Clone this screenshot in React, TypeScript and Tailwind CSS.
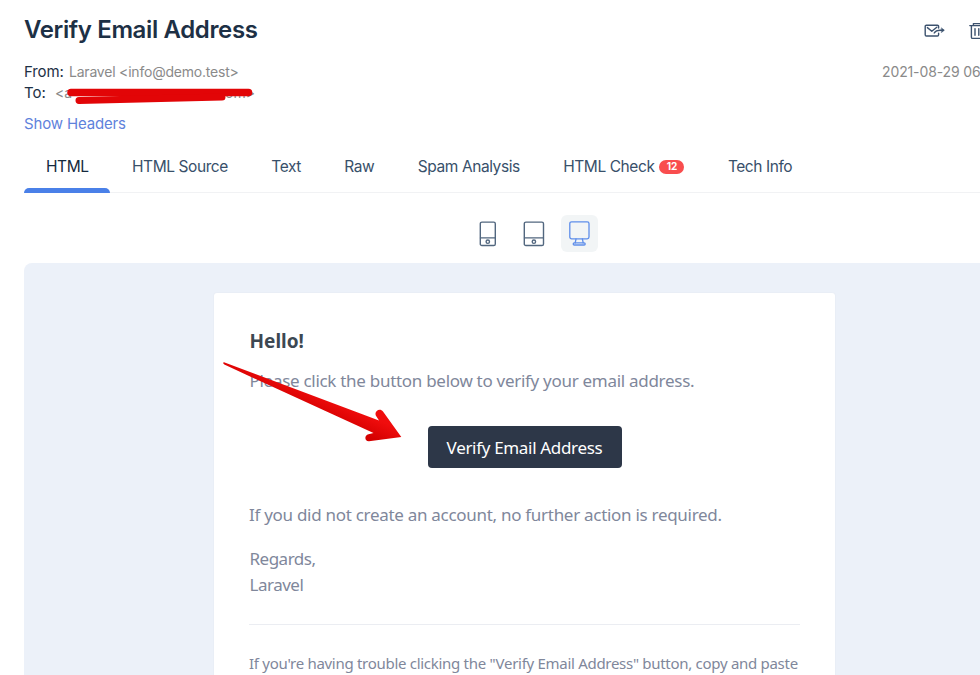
import type { ReactNode } from "react";

const stroke = {
  fill: "none",
  stroke: "currentColor",
  strokeLinecap: "round" as const,
  strokeLinejoin: "round" as const,
};

function ForwardIcon() {
  return (
    <svg width="22" height="16" viewBox="0 0 22 16" {...stroke} strokeWidth="1.4">
      <path d="M14.6 5V3.4a1.2 1.2 0 0 0-1.2-1.2H2.4a1.2 1.2 0 0 0-1.2 1.2v8.4A1.2 1.2 0 0 0 2.4 13h11a1.2 1.2 0 0 0 1.2-1.2v-1.6" />
      <path d="M3.4 4.6 7.8 8.2 12.8 4.2" />
      <path d="M10.2 10c1.2-2 3-2.8 6-2.8h3" />
      <path d="M17.6 5 20.4 7.2 17.6 9.4z" fill="currentColor" strokeWidth="0.5" />
    </svg>
  );
}

function TrashIcon() {
  return (
    <svg width="16" height="18" viewBox="0 0 16 18" {...stroke} strokeWidth="1.4">
      <path d="M.8 3.6h14.4M4.4 3.4V1.6h7.2v1.8M2.4 3.8v11.4a1.2 1.2 0 0 0 1.2 1.2h8.8a1.2 1.2 0 0 0 1.2-1.2V3.8M6 6.6v6.6M9.8 6.6v6.6" />
    </svg>
  );
}

function PhoneIcon() {
  return (
    <svg width="18" height="26" viewBox="0 0 18 26" {...stroke} strokeWidth="1.4">
      <rect x="1.3" y="1.1" width="15" height="23.4" rx="1.6" />
      <path d="M1.5 16.9h14.6" />
      <circle cx="8.8" cy="20.7" r="1.7" />
    </svg>
  );
}

function TabletIcon() {
  return (
    <svg width="22" height="26" viewBox="0 0 22 26" {...stroke} strokeWidth="1.4">
      <rect x="1.3" y="1.1" width="19.2" height="23.4" rx="1.6" />
      <path d="M1.5 16.9h18.8" />
      <circle cx="10.9" cy="20.7" r="1.7" />
    </svg>
  );
}

function DesktopIcon() {
  return (
    <svg width="22" height="26" viewBox="0 0 22 26" {...stroke} strokeWidth="1.3">
      <rect x="0.8" y="1.8" width="19.2" height="17" rx="1.8" />
      <path d="M7 19 6.2 22.8M13.4 19l.8 3.8" />
      <rect x="4.2" y="22.8" width="12" height="2.2" rx="1.1" />
    </svg>
  );
}

function Tab({ children, active = false }: { children: ReactNode; active?: boolean }) {
  return (
    <div
      className={
        active
          ? "relative flex h-[52px] shrink-0 items-center text-[#15293d]"
          : "flex h-[52px] shrink-0 items-center"
      }
    >
      {children}
      {active && (
        <span className="absolute -left-[22px] bottom-0 h-[5px] w-[86px] rounded-t-[5px] bg-[#4a80e8]" />
      )}
    </div>
  );
}

export default function App() {
  return (
    <div className="relative h-[675px] w-[980px] overflow-hidden bg-white pl-6 font-['Inter',sans-serif]">
      <header className="flex h-[61px] items-center justify-between">
        <h1 className="-mt-px text-2xl font-semibold tracking-[-0.37px] text-[#1d3045]">Verify Email Address</h1>
        <div className="-mr-[5px] flex items-center gap-[23px] text-[#3c526e]">
          <ForwardIcon />
          <TrashIcon />
        </div>
      </header>

      <div className="flex h-[21px] items-center justify-between whitespace-nowrap">
        <div className="flex items-center">
          <span className="w-[45px] pt-px text-[15px] tracking-[-0.1px] text-[#1d3045]">From:</span>
          <span className="text-sm tracking-[-0.21px] text-[#8a8a8a]">Laravel &lt;info@demo.test&gt;</span>
        </div>
        <span className="w-[98px] text-sm tracking-[-0.12px] text-[#8a8a8a]">2021-08-29 06</span>
      </div>
      <div className="flex h-[21px] items-center text-[15px]">
        <span className="w-[31px] pt-px text-[#1d3045]">To:</span>
        <span className="flex w-[200px] justify-between text-sm text-[#8a8a8a]">
          <span>&lt;a</span>
          <span>om&gt;</span>
        </span>
      </div>
      <a className="mt-[10px] flex h-[22px] items-center text-[15px] tracking-[-0.15px] text-[#5f82dc]">
        Show Headers
      </a>

      <nav className="mt-[6px] flex h-[52px] items-center gap-[43.4px] whitespace-nowrap border-b border-[#f1f2f4] pl-[22px] text-[15.5px] tracking-[-0.42px] text-[#38506a]">
        <Tab active>HTML</Tab>
        <Tab>HTML Source</Tab>
        <Tab>Text</Tab>
        <Tab>Raw</Tab>
        <Tab>Spam Analysis</Tab>
        <Tab>
          HTML Check
          <span className="ml-[5px] flex h-[14px] w-[25px] items-center justify-center rounded-full bg-[#f94d4e] text-[10px] font-bold tracking-normal text-white">
            12
          </span>
        </Tab>
        <Tab>Tech Info</Tab>
      </nav>

      <div className="flex h-[70px] items-center pl-[455px] pt-[11px] text-[#52677f]">
        <PhoneIcon />
        <span className="ml-[26px]">
          <TabletIcon />
        </span>
        <span className="-mt-[1px] ml-[16px] flex h-[37px] w-[37px] items-center justify-center rounded-md bg-[#f2f5f6] text-[#5f8eea]">
          <DesktopIcon />
        </span>
      </div>

      <section className="h-[412px] rounded-tl-lg bg-[#ecf1f9] pl-[190px] pt-[30px]">
        <article className="h-[400px] w-[621px] rounded-t-[3px] bg-white px-[35px] pt-[34px] font-['Noto_Sans',sans-serif] text-[17px] tracking-[-0.29px] text-[#80879b] shadow-[0_0_2px_rgba(0,0,0,0.05)]">
          <h2 className="h-[28px] pl-[0.5px] text-[19px] font-bold leading-[28px] tracking-normal text-[#3d4852]">
            Hello!
          </h2>
          <p className="mt-[13px] h-[26px] whitespace-nowrap pl-[0.5px] leading-[26px]">
            Please click the button below to verify your email address.
          </p>
          <div className="mt-[32px] flex justify-center">
            <button className="h-[42px] w-[194px] whitespace-nowrap rounded bg-[#2d3748] pt-px text-[17px] tracking-[-0.32px] text-white">
              Verify Email Address
            </button>
          </div>
          <p className="mt-[34px] whitespace-nowrap leading-[26px]">
            If you did not create an account, no further action is required.
          </p>
          <p className="mt-[18px] pl-[0.5px] leading-[26px] tracking-[-0.5px]">
            Regards,
            <br />
            Laravel
          </p>
          <p className="mt-[26px] whitespace-nowrap border-t border-[#ebedf2] pt-[26px] text-[15px] leading-[24px]">
            If you're having trouble clicking the "Verify Email Address" button, copy and paste
          </p>
        </article>
      </section>

      <svg className="absolute left-0 top-0" width="980" height="675" viewBox="0 0 980 675" fill="none">
        <defs>
          <linearGradient id="arrow" x1="300" y1="385" x2="292" y2="403" gradientUnits="userSpaceOnUse">
            <stop offset="0" stopColor="#f00d0d" />
            <stop offset="1" stopColor="#d40000" />
          </linearGradient>
        </defs>
        <path d="M71 92.5 248.5 92.5" stroke="#e20507" strokeWidth="7.5" strokeLinecap="round" />
        <path d="M79 100.5 222 97" stroke="#e20507" strokeWidth="7" strokeLinecap="round" />
        <path
          d="M224 362.2 379 420.5 375.8 415.5C374 411 380 407.5 383 411.5L401.3 437 369 441.3C364.5 441.5 364 435.5 368.5 434.3L373.5 433 224.3 364.6C222.8 363.8 223 362 224 362.2Z"
          fill="url(#arrow)"
        />
      </svg>
    </div>
  );
}
